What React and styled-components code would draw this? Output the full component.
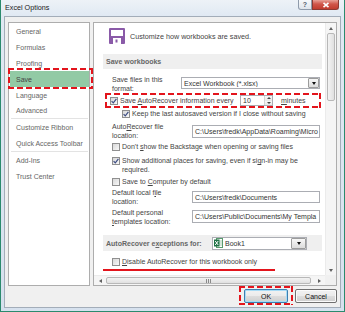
import React from "react";
import styled, { createGlobalStyle, css } from "styled-components";

const FONT = `"Liberation Sans", Arial, sans-serif`;
const RED = "#e3141c";

const GlobalStyle = createGlobalStyle`
  *, *::before, *::after { box-sizing: border-box; }
  html, body { margin: 0; padding: 0; background: #ffffff; }
  body { font-family: ${FONT}; }
`;

const dashed = css`
  background:
    repeating-linear-gradient(90deg, ${RED} 0 6px, transparent 6px 9px) left top / 100% 2px no-repeat,
    repeating-linear-gradient(90deg, ${RED} 0 6px, transparent 6px 9px) left bottom / 100% 2px no-repeat,
    repeating-linear-gradient(180deg, ${RED} 0 6px, transparent 6px 9px) left top / 2px 100% no-repeat,
    repeating-linear-gradient(180deg, ${RED} 0 6px, transparent 6px 9px) right top / 2px 100% no-repeat;
`;

const Window = styled.div`
  width: 345px;
  height: 312px;
  display: flex;
  flex-direction: column;
  padding: 0 3px 3px;
  background: linear-gradient(180deg, #edf2f7 0px, #e0e9f3 16px, #d6e1ee 100%);
  border: 1px solid #2b8a6d;
  border-top: 0;
  font-family: ${FONT};
  font-size: 7px;
  color: #444;
  overflow: hidden;
`;

const TitleBar = styled.header`
  flex: none;
  height: 16px;
  display: flex;
  align-items: flex-start;
  justify-content: space-between;
`;

const Title = styled.h1`
  margin: 0;
  padding-left: 1px;
  font: 400 7.2px/16px ${FONT};
  color: #1a1a1a;
`;

const CaptionButtons = styled.div`
  display: flex;
  margin-right: 2px;
`;

const CaptionButton = styled.div`
  width: ${(p) => p.$w}px;
  height: 10px;
  display: flex;
  align-items: center;
  justify-content: center;
  border: 1px solid ${(p) => (p.$close ? "#8d3a33" : "#8f9bab")};
  border-top: 0;
  border-radius: ${(p) => (p.$close ? "0 0 3px 0" : "0 0 0 3px")};
  background: ${(p) =>
    p.$close
      ? "linear-gradient(#e8a197, #d0564a 45%, #c13c2f)"
      : "linear-gradient(#f7f9fb, #dfe5ec)"};
  color: #55606e;
  font: 700 7px/1 ${FONT};
`;

const Client = styled.div`
  flex: 1;
  display: grid;
  grid-template-columns: 82px 244px;
  grid-template-rows: 264px 14px;
  column-gap: 3px;
  row-gap: 3px;
  padding: 5px 3px 4px;
  background: #f0f0f0;
  border: 1px solid #a3adb9;
`;

const Nav = styled.nav`
  background: #fff;
  border: 1px solid #adadad;
  display: flex;
  flex-direction: column;
  color: #666;
  white-space: nowrap;
`;

const NavItem = styled.div`
  position: relative;
  flex: none;
  height: ${(p) => p.$h || 16}px;
  margin-left: 1px;
  padding-left: 6px;
  display: flex;
  align-items: center;
  ${(p) =>
    p.$active &&
    css`
      background: #92caa5;
      color: #444;
      &::after {
        content: "";
        position: absolute;
        inset: -3px -4px -2px -2px;
        ${dashed}
      }
    `}
`;

const NavSep = styled.div`
  flex: none;
  height: 1px;
  margin: 0 1px 0 2px;
  background: #e3e3e3;
`;

const Panel = styled.section`
  display: grid;
  grid-template-columns: 1fr 11px;
  grid-template-rows: 1fr 10px;
  background: #fff;
  border: 1px solid #adadad;
  overflow: hidden;
`;

const Content = styled.div`
  min-width: 0;
  min-height: 0;
  overflow: hidden;
  padding: 0 3px 0 9px;
  display: flex;
  flex-direction: column;
  color: #444;
`;

const Header = styled.div`
  flex: none;
  display: flex;
  align-items: center;
  gap: 5px;
  height: 16px;
  margin-top: 5px;
  padding-left: 6px;
  font-size: 7.2px;
  white-space: nowrap;
`;

const Band = styled.div`
  flex: none;
  display: flex;
  align-items: center;
  height: ${(p) => p.$h}px;
  margin-top: ${(p) => p.$mt}px;
  padding-left: 3px;
  background: #efefef;
  white-space: nowrap;
`;

const BandTitle = styled.span`
  flex: none;
  width: ${(p) => (p.$w ? p.$w + "px" : "auto")};
  font-weight: 700;
  color: #666;
`;

const FieldRow = styled.div`
  flex: none;
  display: flex;
  align-items: flex-start;
  margin-top: ${(p) => p.$mt || 0}px;
  padding-left: 9px;
`;

const FieldLabel = styled.div`
  flex: none;
  width: ${(p) => p.$w}px;
  display: flex;
  flex-direction: column;
  line-height: ${(p) => p.$lh || 9}px;
  white-space: nowrap;
`;

const Line = styled.span`
  display: block;
`;

const TextBox = styled.div`
  flex: none;
  width: ${(p) => p.$w}px;
  height: ${(p) => p.$h}px;
  margin-top: ${(p) => p.$mt || 0}px;
  display: flex;
  align-items: center;
  padding-left: ${(p) => (p.$pl != null ? p.$pl : 2)}px;
  border: 1px solid #abadb3;
  background: #fff;
  color: #333;
  white-space: nowrap;
  overflow: hidden;
`;

const SelectText = styled.span`
  flex: 1;
  min-width: 0;
  overflow: hidden;
`;

const DropButton = styled.span`
  flex: none;
  width: ${(p) => p.$w || 11}px;
  height: 100%;
  border: 1px solid #9c9c9c;
  border-radius: 1px;
  background: linear-gradient(#f7f7f7, #dcdcdc);
  display: flex;
  align-items: center;
  justify-content: center;
  &::before {
    content: "";
    border-left: 2.5px solid transparent;
    border-right: 2.5px solid transparent;
    border-top: 3px solid #111;
  }
`;

const CheckRow = styled.div`
  flex: none;
  display: flex;
  align-items: ${(p) => (p.$top ? "flex-start" : "center")};
  gap: 2px;
  min-height: 12px;
  margin-top: ${(p) => p.$mt || 0}px;
  padding-left: ${(p) => (p.$indent != null ? p.$indent : 9)}px;
  white-space: nowrap;
  line-height: 8.5px;
`;

const Lines = styled.span`
  display: flex;
  flex-direction: column;
`;

const CheckBox = styled.span`
  flex: none;
  width: 8px;
  height: 8px;
  margin-top: ${(p) => p.$mt || 0}px;
  border: 1px solid #8f8f8f;
  background: linear-gradient(135deg, #d8d8d8, #f8f8f8);
  display: flex;
  align-items: center;
  justify-content: center;
`;

function Check({ checked, mt }) {
  return (
    <CheckBox $mt={mt}>
      {checked && (
        <svg width="6" height="6" viewBox="0 0 6 6">
          <path d="M0.6 3.1 L2.3 4.9 L5.4 0.9" fill="none" stroke="#3d4d83" strokeWidth="1.2" />
        </svg>
      )}
    </CheckBox>
  );
}

const AutoBox = styled.div`
  flex: none;
  height: 15px;
  margin: 0 1px 0 2px;
  padding: 2px 2px 2px 5px;
  display: flex;
  align-items: center;
  white-space: nowrap;
  ${dashed}
`;

const AutoLabel = styled.span`
  flex: none;
  width: 120px;
  margin-left: 2px;
`;

const Spin = styled.div`
  flex: none;
  width: 33px;
  height: 11px;
  display: flex;
  border: 1px solid #abadb3;
  background: #fff;
  color: #333;
`;

const SpinValue = styled.span`
  flex: 1;
  padding-left: 2px;
  display: flex;
  align-items: center;
`;

const SpinArrows = styled.span`
  flex: none;
  width: 8px;
  display: flex;
  flex-direction: column;
  border-left: 1px solid #d4d4d4;
`;

const SpinArrow = styled.span`
  flex: 1;
  display: flex;
  align-items: center;
  justify-content: center;
  background: linear-gradient(#f8f8f8, #e8e8e8);
  &::before {
    content: "";
    border-left: 2px solid transparent;
    border-right: 2px solid transparent;
    ${(p) => (p.$down ? "border-top: 2px solid #444;" : "border-bottom: 2px solid #444;")}
  }
`;

const Minutes = styled.span`
  margin-left: 8px;
`;

const Underline = styled.div`
  flex: none;
  width: 172px;
  height: 2px;
  margin-top: 1px;
  background: ${RED};
`;

const BookSelect = styled(TextBox)`
  gap: 2px;
`;

const VScroll = styled.div`
  display: flex;
  flex-direction: column;
  background: #f5f5f5;
  border-left: 1px solid #ebebeb;
`;

const HScroll = styled.div`
  display: flex;
  background: #f5f5f5;
  border-top: 1px solid #ebebeb;
`;

const Corner = styled.div`
  background: #f0f0f0;
`;

const Arrow = styled.span`
  flex: none;
  ${(p) => (p.$horizontal ? "width: 12px;" : "height: 10px;")}
  display: flex;
  align-items: center;
  justify-content: center;
  &::before {
    content: "";
    ${(p) =>
      ({
        up: "border-left: 2.5px solid transparent; border-right: 2.5px solid transparent; border-bottom: 3px solid #606060;",
        down: "border-left: 2.5px solid transparent; border-right: 2.5px solid transparent; border-top: 3px solid #606060;",
        left: "border-top: 2.5px solid transparent; border-bottom: 2.5px solid transparent; border-right: 3px solid #606060;",
        right: "border-top: 2.5px solid transparent; border-bottom: 2.5px solid transparent; border-left: 3px solid #606060;",
      })[p.$dir]}
  }
`;

const VThumb = styled.span`
  flex: none;
  height: 68px;
  margin: 0 1px;
  border: 1px solid #b8b8b8;
  border-radius: 2px;
  background: linear-gradient(90deg, #f3f3f3, #e0e0e0);
`;

const HThumb = styled.span`
  flex: none;
  width: 205px;
  margin: 1px 0;
  border: 1px solid #b8b8b8;
  border-radius: 2px;
  background: linear-gradient(#f3f3f3, #e0e0e0);
  display: flex;
  align-items: center;
  justify-content: center;
  gap: 1px;
`;

const Grip = styled.span`
  width: 1px;
  height: 4px;
  background: #8a8a8a;
`;

const Spacer = styled.span`
  flex: 1;
`;

const Buttons = styled.div`
  grid-column: 1 / -1;
  display: flex;
  justify-content: flex-end;
  gap: 7px;
`;

const Marked = styled.span`
  position: relative;
  display: inline-flex;
  &::after {
    content: "";
    position: absolute;
    inset: ${(p) => p.$inset};
    pointer-events: none;
    ${dashed}
  }
`;

const DialogButton = styled.button`
  width: ${(p) => p.$w}px;
  height: 14px;
  padding: 0;
  font: 400 7px/1 ${FONT};
  color: #111;
  border: 1px solid ${(p) => (p.$primary ? "#3c7fb1" : "#707070")};
  border-radius: 2px;
  background: linear-gradient(#f2f2f2 0%, #ebebeb 50%, #dddddd 51%, #cfcfcf 100%);
  box-shadow: inset 0 0 0 1px ${(p) => (p.$primary ? "#a8dcf6" : "#fbfbfb")};
`;

function Floppy() {
  return (
    <svg width="16" height="16" viewBox="0 0 16 16" style={{ flex: "none" }}>
      <rect x="0" y="0" width="16" height="16" rx="1" fill="#8a5aa8" />
      <rect x="2" y="2" width="12" height="6" fill="#fff" />
      <rect x="4" y="10" width="8" height="6" fill="#fff" />
      <rect x="6.5" y="11.5" width="2" height="3" fill="#8a5aa8" />
    </svg>
  );
}

function ExcelIcon() {
  return (
    <svg width="9" height="10" viewBox="0 0 9 10" style={{ flex: "none" }}>
      <rect x="2.5" y="0.5" width="6" height="9" fill="#fff" stroke="#5a9a6e" />
      <path d="M5 3h3M5 5h3M5 7h3" stroke="#8fc0a0" strokeWidth="0.8" />
      <rect x="0" y="1.5" width="5.5" height="7" fill="#1e7145" />
      <path d="M1.2 3 L4.2 7 M4.2 3 L1.2 7" stroke="#fff" strokeWidth="1" />
    </svg>
  );
}

export default function App() {
  return (
    <>
      <GlobalStyle />
      <Window>
        <TitleBar>
          <Title>Excel Options</Title>
          <CaptionButtons>
            <CaptionButton $w={14}>?</CaptionButton>
            <CaptionButton $w={27} $close>
              <svg width="8" height="6" viewBox="0 0 8 6">
                <path d="M1.5 0.8 L6.5 5.2 M6.5 0.8 L1.5 5.2" stroke="#fff" strokeWidth="1.6" />
              </svg>
            </CaptionButton>
          </CaptionButtons>
        </TitleBar>
        <Client>
          <Nav>
            <NavItem>General</NavItem>
            <NavItem>Formulas</NavItem>
            <NavItem>Proofing</NavItem>
            <NavItem $active>Save</NavItem>
            <NavItem>Language</NavItem>
            <NavItem $h={15}>Advanced</NavItem>
            <NavSep />
            <NavItem>Customize Ribbon</NavItem>
            <NavItem>Quick Access Toolbar</NavItem>
            <NavSep />
            <NavItem>Add-Ins</NavItem>
            <NavItem>Trust Center</NavItem>
          </Nav>
          <Panel>
            <Content>
              <Header>
                <Floppy />
                <span>Customize how workbooks are saved.</span>
              </Header>
              <Band $mt={10} $h={15}>
                <BandTitle>Save workbooks</BandTitle>
              </Band>
              <FieldRow $mt={7}>
                <FieldLabel $w={69} $lh={8.5}>
                  <Line>Save files in this</Line>
                  <Line>format:</Line>
                </FieldLabel>
                <TextBox $w={139} $h={12} $mt={1} $pl={2}>
                  <SelectText>Excel Workbook (*.xlsx)</SelectText>
                  <DropButton $w={11} />
                </TextBox>
              </FieldRow>
              <AutoBox>
                <Check checked />
                <AutoLabel>
                  Save <u>A</u>utoRecover information every
                </AutoLabel>
                <Spin>
                  <SpinValue>10</SpinValue>
                  <SpinArrows>
                    <SpinArrow />
                    <SpinArrow $down />
                  </SpinArrows>
                </Spin>
                <Minutes>
                  <u>m</u>inutes
                </Minutes>
              </AutoBox>
              <CheckRow $indent={19}>
                <Check checked />
                <span>Keep the last autosaved version if I close without saving</span>
              </CheckRow>
              <FieldRow $mt={2}>
                <FieldLabel $w={80}>
                  <Line>
                    Auto<u>R</u>ecover file
                  </Line>
                  <Line>location:</Line>
                </FieldLabel>
                <TextBox $w={128} $h={13} $mt={3}>
                  C:\Users\fredk\AppData\Roaming\Micro
                </TextBox>
              </FieldRow>
              <CheckRow $mt={1}>
                <Check />
                <span>
                  Don't <u>s</u>how the Backstage when opening or saving files
                </span>
              </CheckRow>
              <CheckRow $mt={4} $top>
                <Check checked />
                <Lines>
                  <Line>
                    Show additional places for saving, even if si<u>g</u>n-in may be
                  </Line>
                  <Line>required.</Line>
                </Lines>
              </CheckRow>
              <CheckRow $mt={2}>
                <Check />
                <span>
                  Save to <u>C</u>omputer by default
                </span>
              </CheckRow>
              <FieldRow>
                <FieldLabel $w={80}>
                  <Line>
                    Default local f<u>i</u>le
                  </Line>
                  <Line>location:</Line>
                </FieldLabel>
                <TextBox $w={128} $h={12} $mt={3}>
                  C:\Users\fredk\Documents
                </TextBox>
              </FieldRow>
              <FieldRow $mt={2}>
                <FieldLabel $w={80}>
                  <Line>Default personal</Line>
                  <Line>
                    <u>t</u>emplates location:
                  </Line>
                </FieldLabel>
                <TextBox $w={128} $h={13} $mt={2}>
                  C:\Users\Public\Documents\My Templa
                </TextBox>
              </FieldRow>
              <Band $mt={9} $h={16}>
                <BandTitle $w={106}>
                  AutoRecover e<u>x</u>ceptions for:
                </BandTitle>
                <BookSelect $w={95} $h={13} $pl={1}>
                  <ExcelIcon />
                  <SelectText>Book1</SelectText>
                  <DropButton $w={15} />
                </BookSelect>
              </Band>
              <CheckRow $mt={5}>
                <Check />
                <span>
                  <u>D</u>isable AutoRecover for this workbook only
                </span>
              </CheckRow>
              <Underline />
            </Content>
            <VScroll>
              <Arrow $dir="up" />
              <VThumb />
              <Spacer />
              <Arrow $dir="down" />
            </VScroll>
            <HScroll>
              <Arrow $horizontal $dir="left" />
              <HThumb>
                <Grip />
                <Grip />
                <Grip />
              </HThumb>
              <Spacer />
              <Arrow $horizontal $dir="right" />
            </HScroll>
            <Corner />
          </Panel>
          <Buttons>
            <Marked $inset="-3px -5px -2px -5px">
              <DialogButton $w={44} $primary>
                OK
              </DialogButton>
            </Marked>
            <DialogButton $w={42}>Cancel</DialogButton>
          </Buttons>
        </Client>
      </Window>
    </>
  );
}
